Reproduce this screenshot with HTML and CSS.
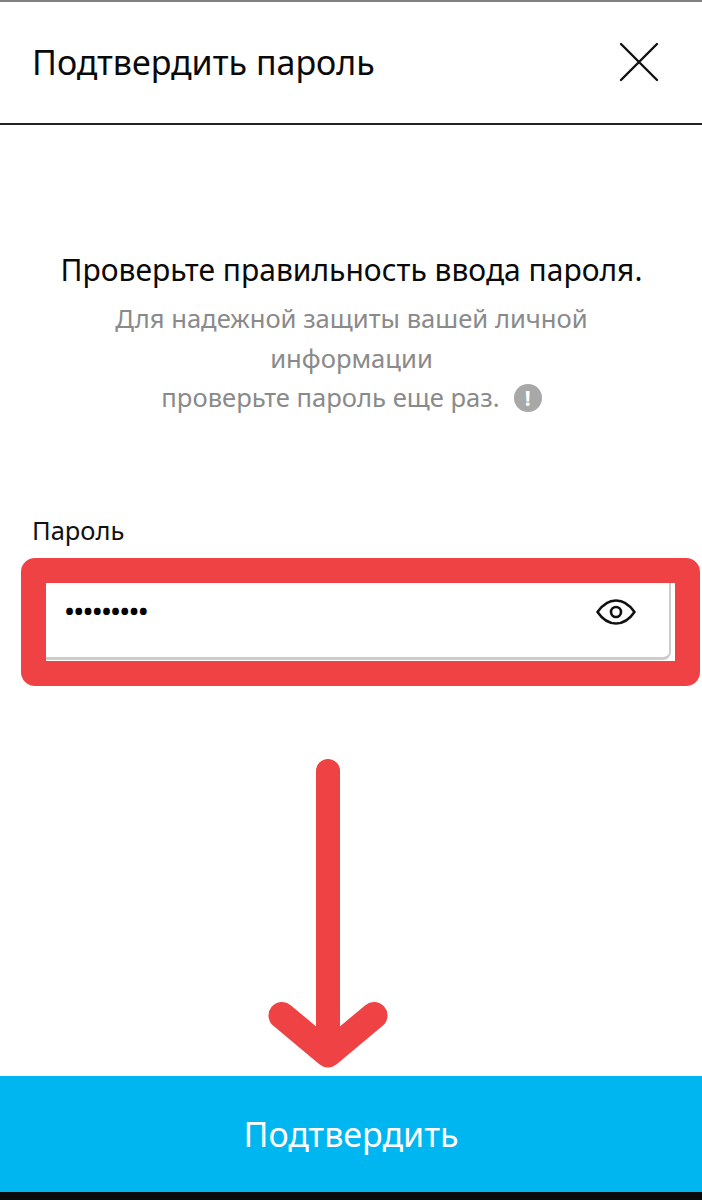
FILE: index.html
```html
<!DOCTYPE html>
<html lang="ru">
<head>
    <meta charset="UTF-8">
    <meta name="viewport" content="width=device-width, initial-scale=1.0">
    <title>Подтвердить пароль</title>
    <link rel="stylesheet" href="styles.css">
</head>
<body>
    <div class="page">
        <header class="top-bar">
            <h1 class="top-title">Подтвердить пароль</h1>
            <svg class="close-icon" width="40" height="40" viewBox="0 0 40 40" fill="none" stroke="#111" stroke-width="2.4" stroke-linecap="round">
                <path d="M2 2L38 38M38 2L2 38"/>
            </svg>
        </header>

        <main class="content">
            <section class="intro">
                <h2 class="intro-title">Проверьте правильность ввода пароля.</h2>
                <p class="intro-text">Для надежной защиты вашей личной<br>информации<br>проверьте пароль еще раз.<span class="info-badge">!</span></p>
            </section>

            <label class="field-label">Пароль</label>
            <div class="field">
                <span class="field-dots">•••••••••</span>
                <svg class="eye-icon" width="40" height="30" viewBox="0 0 40 30" fill="none" stroke="#111" stroke-width="2.6">
                    <path d="M1.5 15C7 7 13 3.5 20 3.5S33 7 38.500 15C33 23 27 26.500 20 26.500S7 23 1.500 15Z" stroke-linejoin="round"/>
                    <circle cx="20" cy="15" r="5"/>
                </svg>
            </div>
        </main>

        <button class="confirm-btn">Подтвердить</button>
        <div class="bottom-strip"></div>

        <!-- red annotations over the screenshot -->
        <div class="mark-box"></div>
        <svg class="mark-arrow" width="120" height="312" viewBox="0 0 120 312" fill="none" stroke="#ef4244" stroke-linecap="round" stroke-linejoin="round">
            <path d="M60 13V296" stroke-width="24"/>
            <path d="M14 257.500L60 296L106 257.500" stroke-width="27"/>
        </svg>
    </div>
</body>
</html>
```

FILE: styles.css
```css
* { box-sizing: border-box; }
body {
    margin: 0;
    background: #fff;
    font-family: 'Noto Sans', 'Open Sans', sans-serif;
    color: #000;
}

.page {
    position: relative;
    display: flex;
    flex-direction: column;
    height: 1200px;
    overflow: hidden;
}

.top-bar {
    display: flex;
    align-items: center;
    justify-content: space-between;
    height: 125px;
    padding: 0 43px 2px 32px;
    border-top: 2px solid #808080;
    border-bottom: 2px solid #222;
}
.top-title {
    margin: 0;
    font-size: 34px;
    font-weight: 400;
    color: #0a0a0a;
}

.content {
    flex: 1;
    padding: 0 31px 0 32px;
}
.intro {
    padding-top: 122px;
    text-align: center;
}
.intro-title {
    margin: 0 0 6px;
    font-size: 30px;
    line-height: 46px;
    font-weight: 400;
    color: #0a0a0a;
}
.intro-text {
    margin: 0;
    font-size: 25.600px;
    line-height: 39.500px;
    color: #8a8a8a;
}
.info-badge {
    display: inline-block;
    width: 28px;
    height: 28px;
    margin-left: 14px;
    border-radius: 50%;
    background: #a8a8a8;
    color: #fff;
    font-size: 21px;
    font-weight: 700;
    line-height: 28px;
    vertical-align: 1px;
}

.field-label {
    display: block;
    margin-top: 95px;
    font-size: 25.500px;
    line-height: 34px;
    color: #111;
}
.field {
    display: flex;
    align-items: center;
    justify-content: space-between;
    width: 639px;
    height: 101px;
    margin-top: 12px;
    padding: 9px 33px 0 33px;
    border: 1px solid #ccc;
    border-width: 0 2px 3px 0;
    border-radius: 8px;
}
.field-dots {
    margin-bottom: 3px;
    font-size: 24px;
    font-weight: 700;
    letter-spacing: 0.2px;
    color: #000;
}

.confirm-btn {
    display: block;
    width: 100%;
    height: 116px;
    padding: 0;
    border: none;
    background: #00b6f1;
    color: #fff;
    font-family: inherit;
    font-size: 34px;
}
.bottom-strip {
    height: 8px;
    background: #0a0a0a;
}

.mark-box {
    position: absolute;
    left: 20.500px;
    top: 558px;
    width: 679px;
    height: 128px;
    border: 25px solid #ef4244;
    border-radius: 14px;
}
.mark-arrow {
    position: absolute;
    left: 268px;
    top: 758px;
}
```
